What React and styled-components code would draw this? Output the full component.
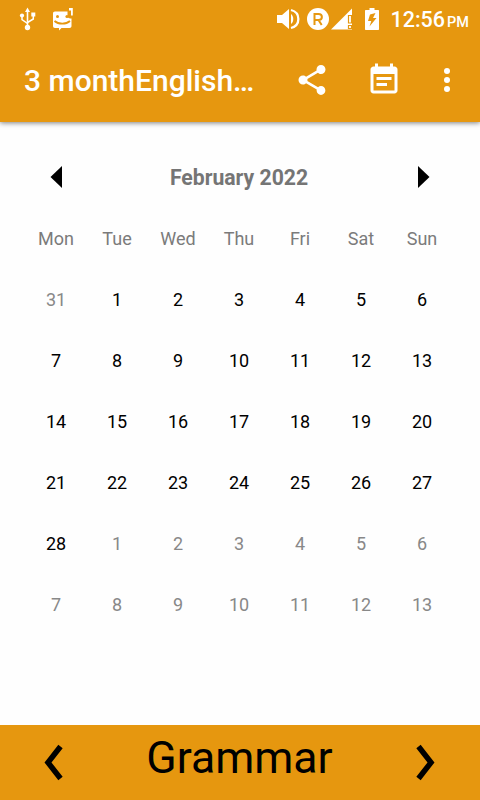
import styled, { createGlobalStyle } from 'styled-components'

const ORANGE = '#e6970f';

const DAYS = ['Mon', 'Tue', 'Wed', 'Thu', 'Fri', 'Sat', 'Sun'];

// 42 cells, starting from the last Monday of January
const CELLS = Array.from({ length: 42 }, (_, i) => {
  if (i === 0) return { day: 31, outside: true };
  if (i <= 28) return { day: i, outside: false };
  return { day: i - 28, outside: true };
});

function App() {
  return (
    <>
      <GlobalStyle />
      <Screen>
        <Header>
          <StatusBar>
            <StatusIcons $gap={16}>
              <UsbIcon />
              <ChatIcon />
            </StatusIcons>
            <StatusIcons $gap={2}>
              <VolumeIcon />
              <RoamingIcon />
              <SignalIcon />
              <BatteryIcon />
              <Clock>12:56<small>PM</small></Clock>
            </StatusIcons>
          </StatusBar>
          <Toolbar>
            <Title>3 monthEnglish…</Title>
            <Action aria-label="share">
              <path d="M18 16.08c-.76 0-1.44.3-1.96.77L8.91 12.7c.05-.23.09-.46.09-.7s-.04-.47-.09-.7l7.05-4.11c.54.5 1.25.81 2.04.81 1.66 0 3-1.34 3-3s-1.34-3-3-3-3 1.34-3 3c0 .24.04.47.09.7L8.04 9.81C7.5 9.31 6.79 9 6 9c-1.66 0-3 1.34-3 3s1.34 3 3 3c.79 0 1.5-.31 2.04-.81l7.12 4.16c-.05.21-.08.43-.08.65 0 1.61 1.31 2.92 2.92 2.92s2.92-1.31 2.92-2.92-1.31-2.92-2.92-2.92z" />
            </Action>
            <Action aria-label="notes">
              <path d="M17 10H7v2h10v-2zm2-7h-1V1h-2v2H8V1H6v2H5c-1.11 0-1.99.9-1.99 2L3 19c0 1.1.89 2 2 2h14c1.1 0 2-.9 2-2V5c0-1.1-.9-2-2-2zm0 16H5V8h14v11zm-5-5H7v2h7v-2z" />
            </Action>
            <Action $menu aria-label="more">
              <circle cx="12" cy="6" r="2" />
              <circle cx="12" cy="12" r="2" />
              <circle cx="12" cy="18" r="2" />
            </Action>
          </Toolbar>
        </Header>

        <Calendar>
          <MonthRow>
            <MonthButton>
              <svg width="12" height="22" viewBox="0 0 12 22"><path d="M12 0v22L.5 11z" /></svg>
            </MonthButton>
            <Month>February 2022</Month>
            <MonthButton>
              <svg width="12" height="22" viewBox="0 0 12 22"><path d="M0 0v22l11.5-11z" /></svg>
            </MonthButton>
          </MonthRow>
          <Grid>
            {DAYS.map((d) => <Weekday key={d}>{d}</Weekday>)}
            {CELLS.map((c, i) => <Day key={i} $outside={c.outside}>{c.day}</Day>)}
          </Grid>
        </Calendar>

        <Footer>
          <Chevron viewBox="0 0 22 40"><path d="M17.5 3.5 5 19.500 17.500 35.500" /></Chevron>
          <Topic>Grammar</Topic>
          <Chevron viewBox="0 0 22 40"><path d="M4.500 3.500 17 19.500 4.500 35.500" /></Chevron>
        </Footer>
      </Screen>
    </>
  )
}

export default App;

const UsbIcon = () => (
  <svg width="18" height="24" viewBox="0 0 18 24" fill="#fff">
    <path d="M7.700 22V4h1.600v18z" />
    <path d="M8.500 .5l2.500 4.500h-5z" />
    <path d="M3 9v3.500l5.500 4M14.300 8v4l-5.800 3.500" fill="none" stroke="#fff" strokeWidth="1.500" />
    <circle cx="3" cy="8.500" r="2.100" />
    <path d="M12.300 5.500h4v4h-4z" />
    <circle cx="8.500" cy="20.500" r="2.700" />
  </svg>
);

const ChatIcon = () => (
  <svg width="21" height="24" viewBox="0 0 21 24" fill="#fff">
    <path d="M2 4.500h12.500v5.500c1 1.200 2.500 1.500 4 1.500V19c0 1.300-.7 2-2 2H8.500L6 23.500V21H2c-1.300 0-2-.7-2-2V6.500c0-1.300.7-2 2-2z" />
    <path d="M16 1H19.800v7.500H18V3.500H16z" />
    <circle cx="4.500" cy="9.500" r="1.500" fill={ORANGE} />
    <circle cx="14" cy="9.500" r="1.600" fill={ORANGE} />
    <path d="M1.500 14c4 3.600 11.500 3.600 15.500 0" fill="none" stroke={ORANGE} strokeWidth="1.700" />
  </svg>
);

const VolumeIcon = () => (
  <svg width="24" height="24" viewBox="0 0 24 24" fill="#fff">
    <path d="M0 8v8h5l7 6V2L5 8z" />
    <path d="M14 7c3 2 3 8 0 10z" />
    <path d="M14 3c9.800 2.500 9.800 15.500 0 18" fill="none" stroke="#fff" strokeWidth="2.300" />
  </svg>
);

const RoamingIcon = () => (
  <svg width="22" height="22" viewBox="0 0 22 22">
    <circle cx="11" cy="11" r="11" fill="#fff" />
    <path d="M7.500 17V6H11.500C16 6 16 12 11.500 12H7.500M11.500 12l3.200 5" fill="none" stroke={ORANGE} strokeWidth="2" />
  </svg>
);

const SignalIcon = () => (
  <svg width="22" height="22" viewBox="0 0 22 22" fill="#fff">
    <path d="M0 21.500 21 .5v21z" />
    <path d="M17.500 7.500h3v7.500h-3zM17.500 17.500h3v3h-3z" fillOpacity=".4" stroke={ORANGE} strokeWidth="1.200" />
  </svg>
);

const BatteryIcon = () => (
  <svg width="15" height="22" viewBox="0 0 15 22" fill="#fff">
    <path d="M4.500 0h5v2H13c.8 0 1 .3 1 1v18c0 .7-.3 1-1 1H1c-.7 0-1-.3-1-1V3c0-.7.3-1 1-1h3.500z" />
    <path d="M10.500 5 5 6.500 3 13h3.300L4.500 18.500 11.500 10H8z" fill={ORANGE} />
  </svg>
);

const GlobalStyle = createGlobalStyle`
  body {
    margin: 0;
    background: #fefefe;
    font-family: Roboto, sans-serif;
  }
`;

const Screen = styled.div`
  width: 480px;
  height: 800px;
  display: flex;
  flex-direction: column;
  overflow: hidden;
`;

const Header = styled.header`
  flex: none;
  background: ${ORANGE};
  box-shadow: 0 1px 5px rgba(0, 0, 0, 0.5);
`;

const StatusBar = styled.div`
  height: 38px;
  display: flex;
  justify-content: space-between;
  align-items: center;
  padding: 0 11px 0 19px;
`;

const StatusIcons = styled.div`
  display: flex;
  align-items: center;
  gap: ${(p) => p.$gap}px;
  svg {
    display: block;
    flex: none;
  }
  svg:nth-child(2):not(:last-child) {
    margin-left: 4px;
  }
  svg:nth-child(4) {
    margin-left: 10px;
  }
`;

const Clock = styled.div`
  margin-left: 9px;
  color: #fff;
  font-size: 21.500px;
  font-weight: 500;
  line-height: 36px;
  padding-top: 4px;
  white-space: nowrap;
  small {
    font-size: 14.500px;
    margin-left: 2px;
  }
`;

const Toolbar = styled.div`
  height: 84px;
  display: flex;
  align-items: center;
  padding: 0 15px 0 24px;
  box-sizing: border-box;
`;

const Title = styled.h1`
  flex: 1;
  margin: 0;
  color: #fff;
  font-size: 30px;
  font-weight: 500;
  white-space: nowrap;
`;

const Action = styled.svg.attrs({ viewBox: '0 0 24 24' })`
  width: 36px;
  height: 36px;
  flex: none;
  fill: #fff;
  margin-left: ${(p) => (p.$menu ? 27 : 36)}px;
`;

const Calendar = styled.main`
  flex: 1;
  padding: 25px 25.500px 0;
`;

const MonthRow = styled.div`
  height: 61px;
  display: flex;
  align-items: center;
`;

const MonthButton = styled.button`
  width: 61px;
  height: 61px;
  padding: 0 0 2px;
  border: none;
  background: none;
  display: flex;
  align-items: center;
  justify-content: center;
`;

const Month = styled.h2`
  flex: 1;
  margin: 0;
  padding-right: 2px;
  text-align: center;
  color: #757575;
  font-size: 21.200px;
  font-weight: 700;
`;

const Grid = styled.div`
  display: grid;
  grid-template-columns: repeat(7, 61px);
  grid-auto-rows: 61px;
`;

const Weekday = styled.div`
  display: flex;
  align-items: center;
  justify-content: center;
  color: #7b7b7b;
  font-size: 18px;
`;

const Day = styled(Weekday)`
  color: ${(p) => (p.$outside ? '#888' : '#000')};
`;

const Footer = styled.footer`
  height: 75px;
  flex: none;
  display: flex;
  align-items: center;
  justify-content: space-between;
  padding: 0 44px 0 43px;
  box-sizing: border-box;
  background: ${ORANGE};
`;

const Topic = styled.div`
  color: #000;
  font-size: 44.600px;
  line-height: 53px;
  padding-bottom: 9px;
`;

const Chevron = styled.svg`
  width: 22px;
  height: 40px;
  fill: none;
  stroke: #000;
  stroke-width: 5.500;
`;
